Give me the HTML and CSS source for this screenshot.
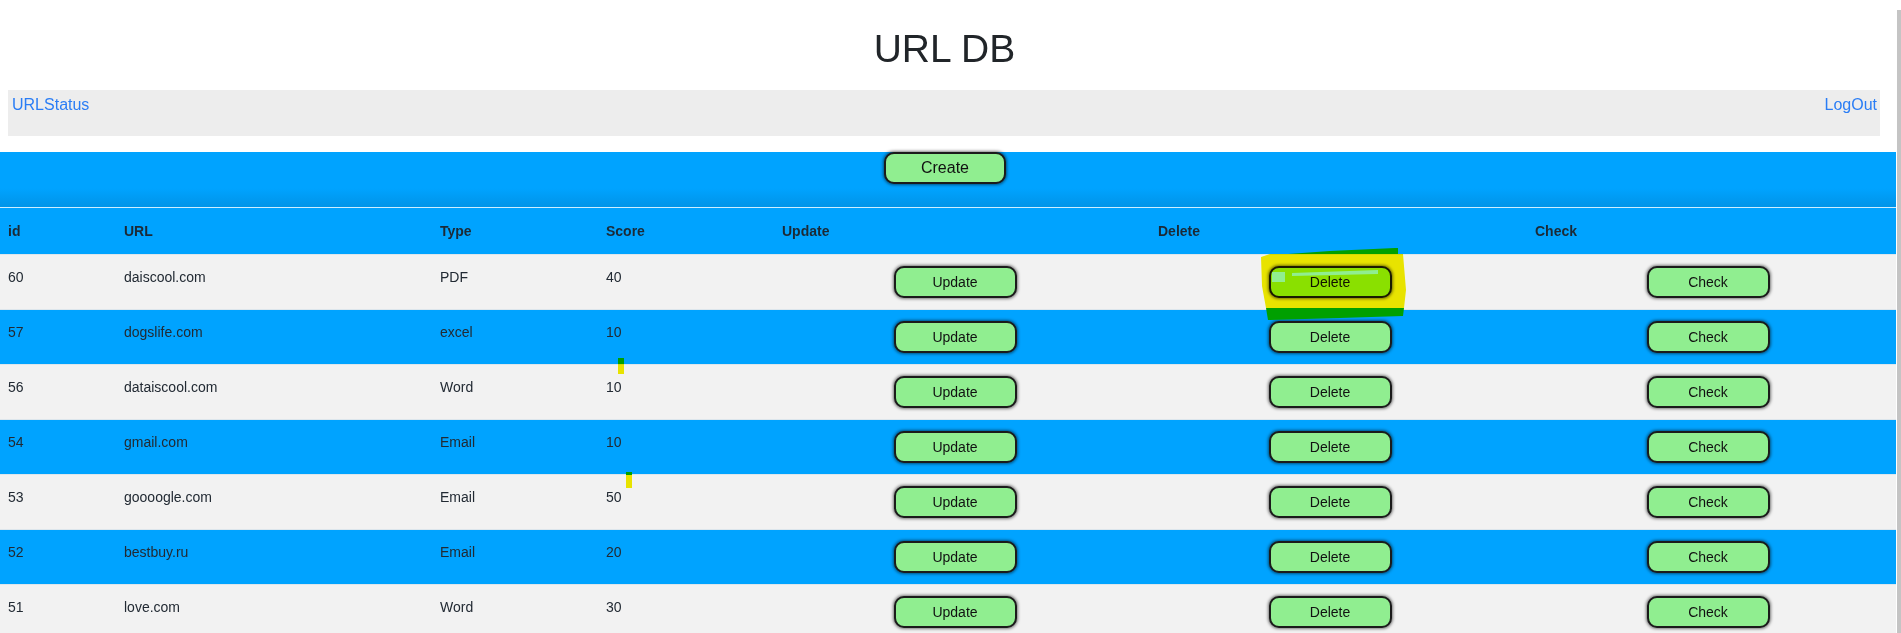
FILE: index.html
```html
<!DOCTYPE html>
<html lang="en">
<head>
<meta charset="utf-8">
<title>URL DB</title>
<link rel="stylesheet" href="styles.css">
</head>
<body>
<div class="page">
  <h1 class="title">URL DB</h1>
  <nav class="topnav">
    <a class="navlink" href="#">URLStatus</a>
    <a class="navlink" href="#">LogOut</a>
  </nav>
  <section class="board">
    <div class="create-bar"><button class="btn btn-create">Create</button></div>
    <div class="thead">
      <div class="th">id</div>
      <div class="th">URL</div>
      <div class="th">Type</div>
      <div class="th">Score</div>
      <div class="th">Update</div>
      <div class="th">Delete</div>
      <div class="th">Check</div>
    </div>
    <div class="row row-light">
      <div class="td">60</div><div class="td">daiscool.com</div><div class="td">PDF</div><div class="td">40</div>
      <div class="tdb"><button class="btn">Update</button></div><div class="tdb"><button class="btn">Delete</button></div><div class="tdb"><button class="btn">Check</button></div>
    </div>
    <div class="row row-blue">
      <div class="td">57</div><div class="td">dogslife.com</div><div class="td">excel</div><div class="td">10</div>
      <div class="tdb"><button class="btn">Update</button></div><div class="tdb"><button class="btn">Delete</button></div><div class="tdb"><button class="btn">Check</button></div>
    </div>
    <div class="row row-light">
      <div class="td">56</div><div class="td">dataiscool.com</div><div class="td">Word</div><div class="td">10</div>
      <div class="tdb"><button class="btn">Update</button></div><div class="tdb"><button class="btn">Delete</button></div><div class="tdb"><button class="btn">Check</button></div>
    </div>
    <div class="row row-blue">
      <div class="td">54</div><div class="td">gmail.com</div><div class="td">Email</div><div class="td">10</div>
      <div class="tdb"><button class="btn">Update</button></div><div class="tdb"><button class="btn">Delete</button></div><div class="tdb"><button class="btn">Check</button></div>
    </div>
    <div class="row row-light">
      <div class="td">53</div><div class="td">goooogle.com</div><div class="td">Email</div><div class="td">50</div>
      <div class="tdb"><button class="btn">Update</button></div><div class="tdb"><button class="btn">Delete</button></div><div class="tdb"><button class="btn">Check</button></div>
    </div>
    <div class="row row-blue">
      <div class="td">52</div><div class="td">bestbuy.ru</div><div class="td">Email</div><div class="td">20</div>
      <div class="tdb"><button class="btn">Update</button></div><div class="tdb"><button class="btn">Delete</button></div><div class="tdb"><button class="btn">Check</button></div>
    </div>
    <div class="row row-light">
      <div class="td">51</div><div class="td">love.com</div><div class="td">Word</div><div class="td">30</div>
      <div class="tdb"><button class="btn">Update</button></div><div class="tdb"><button class="btn">Delete</button></div><div class="tdb"><button class="btn">Check</button></div>
    </div>
  </section>

  <svg class="ink ink-yellow" viewBox="0 0 1896 700" width="1896" height="700" aria-hidden="true">
    <path fill="#f5f000" fill-rule="evenodd" d="M1261 257 L1270 254 L1403 254 L1406 290 L1404 308 L1266 308 L1262 286 Z M1272 272 L1285 272 L1285 282 L1272 282 Z M1292 273 L1378 270 L1378 274 L1292 276 Z"/>
    <rect x="618" y="364" width="6" height="10" fill="#f5f000"/>
    <rect x="626" y="475" width="6" height="13" fill="#f5f000"/>
  </svg>
  <svg class="ink ink-green" viewBox="0 0 1896 700" width="1896" height="700" aria-hidden="true">
    <path fill="#00a000" d="M1288 254 L1330 251 L1395 248 L1398 248 L1398 254 Z"/>
    <path fill="#00a000" d="M1266 308 L1404 308 L1403 316 L1340 318 L1268 320 Z"/>
    <rect x="618" y="358" width="6" height="6" fill="#00a000"/>
    <rect x="626" y="472" width="6" height="3" fill="#00a000"/>
  </svg>
</div>
<div class="scrollrail"><div class="scrollthumb"></div></div>
</body>
</html>
```

FILE: styles.css
```css
html {
  overflow: hidden;
}

body {
  margin: 0;
  display: flex;
  align-items: flex-start;
  font-family: "Liberation Sans", Arial, sans-serif;
  color: #212529;
  background: #ffffff;
}

.page {
  position: relative;
  flex: 0 0 1896px;
  width: 1896px;
  overflow: hidden;
}

.scrollrail {
  flex: 0 0 5px;
  height: 633px;
  box-sizing: border-box;
  padding: 10px 0 0 1px;
  background: #ffffff;
}

.scrollthumb {
  height: 100%;
  background: #c4c4c4;
}

.title {
  margin: 27px 0 19px;
  padding-right: 7px;
  height: 44px;
  line-height: 44px;
  font-size: 39px;
  font-weight: 400;
  text-align: center;
  color: #212529;
}

.topnav {
  display: flex;
  justify-content: space-between;
  align-items: flex-start;
  height: 46px;
  box-sizing: border-box;
  margin: 0 16px 16px 8px;
  padding: 6px 3px 0 4px;
  background: #ededed;
}

.navlink {
  font-size: 16px;
  line-height: 18px;
  color: #2a7df5;
  text-decoration: none;
}

.board {
  background: #00a3ff;
}

.create-bar {
  height: 55px;
  display: flex;
  justify-content: center;
  align-items: flex-start;
  padding-right: 6px;
  background: linear-gradient(to bottom, #00a3ff 0%, #00a3ff 66%, #0094e8 100%);
}

.btn {
  box-sizing: border-box;
  width: 123px;
  height: 32px;
  padding: 0;
  border: 2px solid #1b1b1b;
  border-radius: 10px;
  background: #90ee90;
  box-shadow: 0 0 3px 1px rgba(0, 0, 0, 0.5);
  font-family: "Liberation Sans", Arial, sans-serif;
  font-size: 14px;
  color: #111;
  cursor: pointer;
}

.btn-create {
  width: 122px;
  font-size: 16px;
}

.thead {
  display: grid;
  grid-template-columns: 116px 316px 166px 176px 376px 377px 1fr;
  height: 47px;
  box-sizing: border-box;
  border-top: 1px solid #cdeeff;
  background: #00a3ff;
}

.th {
  display: flex;
  align-items: center;
  padding-left: 8px;
  font-size: 14px;
  font-weight: 700;
  color: #1c2a36;
}

.row {
  display: grid;
  grid-template-columns: 116px 316px 166px 176px 362px 388px 368px 1fr;
  height: 55px;
  box-sizing: border-box;
  border-top: 1px solid #dde6ec;
}

.row-light {
  background: #f2f2f2;
}

.row-blue {
  background: #00a3ff;
}

.td {
  padding: 14px 0 0 8px;
  font-size: 14px;
  line-height: 16px;
  color: #222a33;
}

.tdb {
  display: flex;
  justify-content: center;
  align-items: center;
}

.ink {
  position: absolute;
  top: 0;
  left: 0;
  pointer-events: none;
}

.ink-yellow {
  mix-blend-mode: multiply;
}
```
